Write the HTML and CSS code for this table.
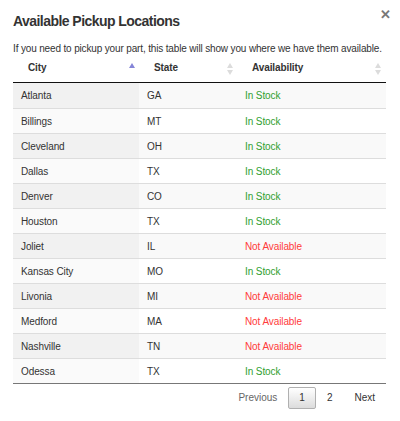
FILE: index.html
```html
<!DOCTYPE html>
<html>
<head>
<meta charset="utf-8">
<link rel="stylesheet" href="styles.css">
</head>
<body>
<div class="modal">
  <div class="modal-header">
    <h4 class="title">Available Pickup Locations</h4>
    <span class="close">&#x2715;</span>
  </div>
  <p class="desc">If you need to pickup your part, this table will show you where we have them available.</p>
  <table class="dt">
    <thead>
      <tr>
        <th class="c1">City<span class="sort asc"></span></th>
        <th class="c2">State<span class="sort both"></span></th>
        <th class="c3">Availability<span class="sort both"></span></th>
      </tr>
    </thead>
    <tbody>
      <tr class="odd"><td class="s">Atlanta</td><td>GA</td><td class="ok">In Stock</td></tr>
      <tr class="even"><td class="s">Billings</td><td>MT</td><td class="ok">In Stock</td></tr>
      <tr class="odd"><td class="s">Cleveland</td><td>OH</td><td class="ok">In Stock</td></tr>
      <tr class="even"><td class="s">Dallas</td><td>TX</td><td class="ok">In Stock</td></tr>
      <tr class="odd"><td class="s">Denver</td><td>CO</td><td class="ok">In Stock</td></tr>
      <tr class="even"><td class="s">Houston</td><td>TX</td><td class="ok">In Stock</td></tr>
      <tr class="odd"><td class="s">Joliet</td><td>IL</td><td class="na">Not Available</td></tr>
      <tr class="even"><td class="s">Kansas City</td><td>MO</td><td class="ok">In Stock</td></tr>
      <tr class="odd"><td class="s">Livonia</td><td>MI</td><td class="na">Not Available</td></tr>
      <tr class="even"><td class="s">Medford</td><td>MA</td><td class="na">Not Available</td></tr>
      <tr class="odd"><td class="s">Nashville</td><td>TN</td><td class="na">Not Available</td></tr>
      <tr class="even"><td class="s">Odessa</td><td>TX</td><td class="ok">In Stock</td></tr>
    </tbody>
  </table>
  <div class="paging">
    <span class="pbtn disabled">Previous</span>
    <span class="pbtn current">1</span>
    <span class="pbtn">2</span>
    <span class="pbtn">Next</span>
  </div>
</div>
</body>
</html>
```
FILE: styles.css
```css
html, body {
  margin: 0;
  padding: 0;
  background: #fff;
}
body {
  font-family: "Liberation Sans", Arial, sans-serif;
  color: #333;
  font-size: 10px;
}
.modal {
  width: 373px;
  padding: 0 14px 0 13px;
}
.modal-header {
  display: flex;
  justify-content: space-between;
  align-items: flex-start;
  padding-top: 11px;
}
.title {
  margin: 0;
  font-size: 14px;
  letter-spacing: -0.55px;
  font-weight: bold;
  line-height: 20px;
  color: #333;
}
.close {
  font-size: 13px;
  font-weight: bold;
  color: #777;
  line-height: 14px;
  margin-top: -3px;
  margin-right: -5px;
}
.desc {
  margin: 12px 0 0;
  font-size: 10px;
  letter-spacing: -0.15px;
  line-height: 12px;
  color: #333;
  white-space: nowrap;
}
.dt {
  width: 373px;
  border-collapse: collapse;
}
.dt th {
  text-align: left;
  font-weight: bold;
  font-size: 10px;
  letter-spacing: -0.1px;
  line-height: 13px;
  padding: 6px 18px 8px 15px;
  border-bottom: 1px solid #111;
  position: relative;
}
.c1 { width: 126px; box-sizing: border-box; }
.c2 { width: 98px; box-sizing: border-box; }
.dt td {
  height: 25px;
  padding: 0 8px;
  box-sizing: border-box;
  border-top: 1px solid #ddd;
  letter-spacing: -0.1px;
}
.dt tbody tr:first-child td { border-top: none; height: 26px; }
.dt tbody tr:last-child td { border-bottom: 1px solid #777; }
.odd td { background: #f9f9f9; }
.odd td.s { background: #f1f1f1; }
.even td { background: #fff; }
.even td.s { background: #fafafa; }
.ok { color: #30a030; }
.na { color: #ff3b3b; }
.sort {
  position: absolute;
  right: 4px;
  top: 50%;
  width: 6px;
  height: 12px;
  margin-top: -6px;
}
.c3 .sort { right: 5px; }
.sort.asc::before {
  content: "";
  position: absolute;
  left: 0;
  top: 0;
  border-left: 3px solid transparent;
  border-right: 3px solid transparent;
  border-bottom: 5px solid #8585d8;
}
.sort.both::before,
.sort.both::after {
  content: "";
  position: absolute;
  left: 0;
  border-left: 3px solid transparent;
  border-right: 3px solid transparent;
}
.sort.both::before {
  top: 0;
  border-bottom: 5px solid #dcdcdc;
}
.sort.both::after {
  top: 7px;
  border-top: 5px solid #dcdcdc;
}
.paging {
  display: flex;
  justify-content: flex-end;
  padding-top: 3px;
}
.pbtn {
  padding: 4px 10px;
  line-height: 12px;
  border: 1px solid transparent;
  border-radius: 2px;
  color: #333;
  text-align: center;
}
.pbtn.disabled { color: #666; }
.pbtn.current {
  border-color: #b0b0b0;
  background: linear-gradient(to bottom, #fff 0%, #dcdcdc 100%);
}
```
